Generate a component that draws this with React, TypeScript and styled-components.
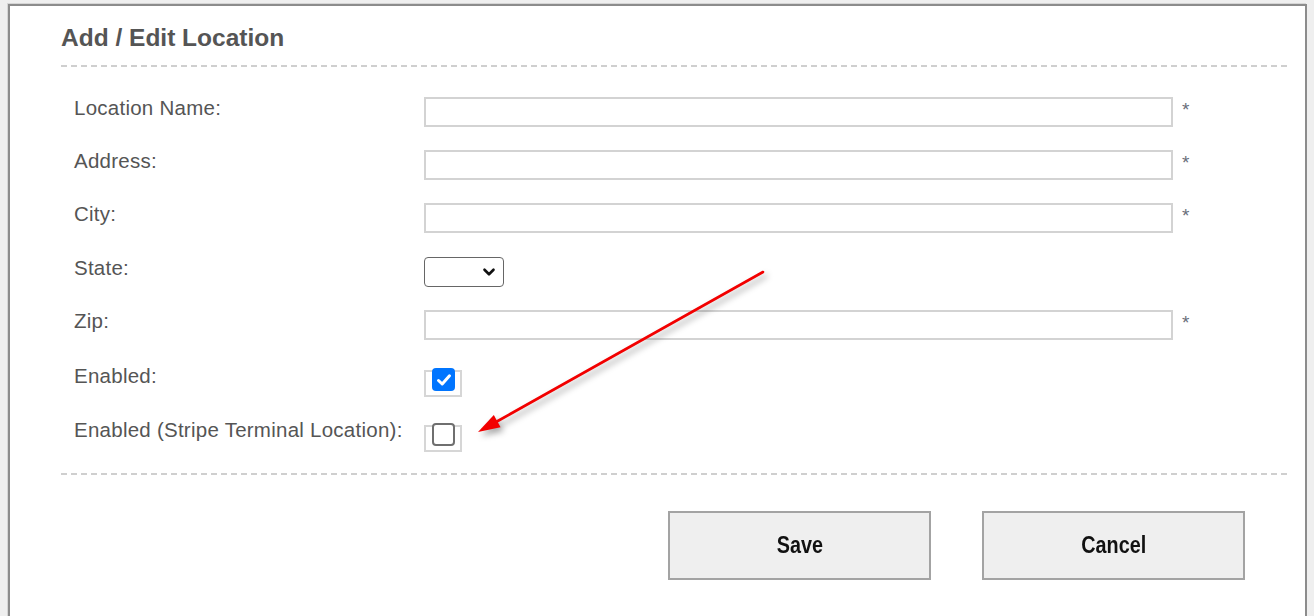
import React from "react";
import styled, { createGlobalStyle } from "styled-components";
import { ChevronDown } from "lucide-react";

const GlobalStyle = createGlobalStyle`
  html, body {
    margin: 0;
    padding: 0;
    background: #efefef;
    overflow: hidden;
  }
  body {
    font-family: "Liberation Sans", Arial, sans-serif;
  }
`;

const Page = styled.div`
  position: relative;
  width: 1314px;
  height: 616px;
  padding: 4px 0 0 8px;
  box-sizing: border-box;
`;

const Panel = styled.div`
  width: 1299px;
  min-height: 640px;
  box-sizing: border-box;
  background: #fff;
  border: 2px solid #8c8c8c;
  box-shadow: -1px -1px 0 #d6d6d6;
  padding: 18px 15px 0 51px;
`;

const Title = styled.h2`
  margin: 0;
  font-size: 24.5px;
  line-height: 28px;
  font-weight: bold;
  color: #555;
`;

const Divider = styled.div<{ $top: number }>`
  height: 2px;
  margin-top: ${({ $top }) => $top}px;
  background: repeating-linear-gradient(to right, #cfcfcf 0 6px, transparent 6px 10px);
`;

const Form = styled.div`
  margin-top: 30px;
  padding-left: 13px;
`;

const Row = styled.div<{ $height: number }>`
  display: grid;
  grid-template-columns: 350px auto;
  height: ${({ $height }) => $height}px;
  align-items: start;
`;

const Label = styled.label`
  font-size: 20.5px;
  letter-spacing: 0.25px;
  line-height: 22px;
  color: #555;
`;

const Control = styled.div<{ $offset?: number }>`
  display: flex;
  align-items: flex-start;
  margin-top: ${({ $offset }) => $offset ?? 0}px;
`;

const TextInput = styled.input`
  width: 749px;
  height: 30px;
  box-sizing: border-box;
  border: 2px solid #d3d3d3;
  background: #fff;
  outline: none;
`;

const Required = styled.span`
  margin: 2px 0 0 9px;
  font-size: 19px;
  line-height: 22px;
  color: #6a6f7a;
`;

const SelectWrap = styled.div`
  position: relative;
  width: 80px;
  height: 30px;
  svg {
    position: absolute;
    right: 6px;
    top: 6px;
    pointer-events: none;
  }
`;

const Select = styled.select`
  appearance: none;
  width: 80px;
  height: 30px;
  box-sizing: border-box;
  border: 1.5px solid #666;
  border-radius: 4px;
  background: #fff;
`;

const CheckFrame = styled.div`
  width: 38px;
  height: 27px;
  box-sizing: border-box;
  border: 2px solid #d6d6d6;
`;

const CheckBox = styled.span<{ $checked: boolean }>`
  display: flex;
  align-items: center;
  justify-content: center;
  width: 23px;
  height: 23px;
  box-sizing: border-box;
  margin: -4px 0 0 6px;
  border-radius: 4px;
  background: ${({ $checked }) => ($checked ? "#0075ff" : "#fff")};
  border: ${({ $checked }) => ($checked ? "none" : "2px solid #6f6f6f")};
`;

const Buttons = styled.div`
  display: flex;
  justify-content: flex-end;
  gap: 51px;
  margin-top: 36px;
  padding-right: 45px;
`;

const Button = styled.button`
  width: 263px;
  height: 69px;
  box-sizing: border-box;
  background: #efefef;
  border: 2px solid #a3a3a3;
  font-family: "Liberation Sans", Arial, sans-serif;
  font-weight: bold;
  font-size: 23px;
  color: #111;
  span {
    display: inline-block;
    transform: scaleX(0.86);
  }
`;

const Annotation = styled.svg`
  position: absolute;
  left: 0;
  top: 0;
  pointer-events: none;
  filter: drop-shadow(3px 4px 3px rgba(0, 0, 0, 0.35));
`;

type Field = { label: string; height: number };

const textFields: Field[] = [
  { label: "Location Name:", height: 53 },
  { label: "Address:", height: 53 },
  { label: "City:", height: 54 },
];

const Check = ({ checked }: { checked: boolean }) => (
  <CheckFrame>
    <CheckBox $checked={checked}>
      {checked && (
        <svg width="18" height="18" viewBox="0 0 18 18">
          <path d="M3.5 9.5 L7.2 13 L14.5 4.8" fill="none" stroke="#fff" strokeWidth="3" strokeLinecap="round" strokeLinejoin="round" />
        </svg>
      )}
    </CheckBox>
  </CheckFrame>
);

export default function App() {
  return (
    <Page>
      <GlobalStyle />
      <Panel>
        <Title>Add / Edit Location</Title>
        <Divider $top={13} />
        <Form>
          {textFields.map((f) => (
            <Row key={f.label} $height={f.height}>
              <Label>{f.label}</Label>
              <Control>
                <TextInput />
                <Required>*</Required>
              </Control>
            </Row>
          ))}
          <Row $height={53}>
            <Label>State:</Label>
            <Control>
              <SelectWrap>
                <Select />
                <ChevronDown size={18} strokeWidth={3.5} color="#111" />
              </SelectWrap>
            </Control>
          </Row>
          <Row $height={55}>
            <Label>Zip:</Label>
            <Control>
              <TextInput />
              <Required>*</Required>
            </Control>
          </Row>
          <Row $height={54}>
            <Label>Enabled:</Label>
            <Control $offset={5}>
              <Check checked />
            </Control>
          </Row>
          <Row $height={54}>
            <Label>Enabled (Stripe Terminal Location):</Label>
            <Control $offset={6}>
              <Check checked={false} />
            </Control>
          </Row>
        </Form>
        <Divider $top={0} />
        <Buttons>
          <Button><span>Save</span></Button>
          <Button><span>Cancel</span></Button>
        </Buttons>
      </Panel>
      <Annotation width="1314" height="616" viewBox="0 0 1314 616">
        <line x1="763" y1="272" x2="496" y2="422" stroke="#f20000" strokeWidth="2.6" strokeLinecap="round" />
        <polygon points="478,432 500.6,427.3 493.8,415.1" fill="#f20000" />
      </Annotation>
    </Page>
  );
}
